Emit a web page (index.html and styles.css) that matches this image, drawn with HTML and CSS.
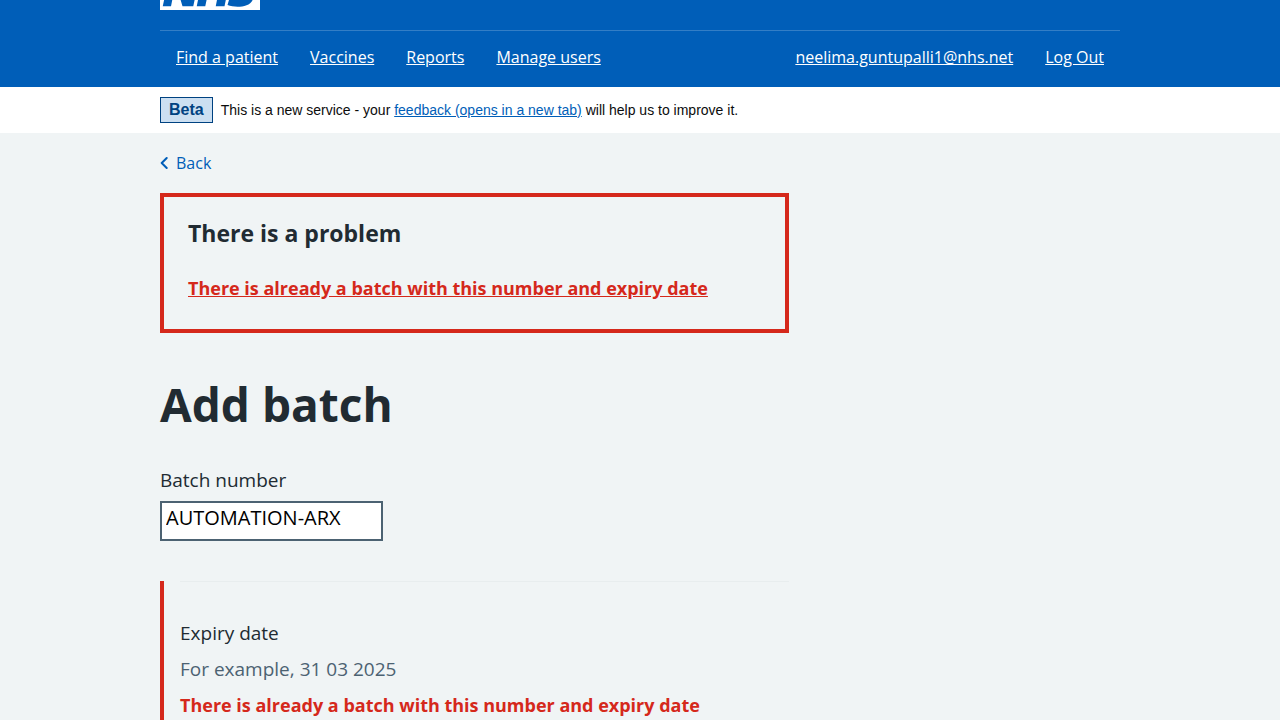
FILE: index.html
```html
<!DOCTYPE html>
<html lang="en">
<head>
<meta charset="utf-8">
<meta name="viewport" content="width=device-width, initial-scale=1">
<title>Add batch</title>
<link rel="stylesheet" href="styles.css">
</head>
<body>
<header class="header">
  <div class="container">
    <a class="logo" href="#" aria-label="NHS">
      <svg class="logo-image" viewBox="0 60 200 20" aria-hidden="true"><path fill="#fff" d="M200 0v80H0V0h200Zm-27.500 5.500c-14.500 0-29 5-29 22 0 10.200 7.700 13.500 14.700 16.300l.7.300c5.400 2 10.100 3.900 10.100 8.400 0 6.500-8.500 7.500-14 7.500s-12.500-1.500-16-3.500L135 70c5.500 2 13.500 3.500 20 3.500 15.500 0 32-4.500 32-22.500 0-19.500-25.500-16.500-25.500-25.500 0-5.500 5.500-6.500 12.500-6.500a35 35 0 0 1 14.500 3l4-13.500c-4.500-2-12-3-20-3Zm-131 2h-22l-14 65H22l9-45h.5l13.500 45h21.500l14-65H64l-9 45h-.5l-13-45Zm63 0h-18l-13 65h17l6-28H117l-5.500 28H129l13.500-65H125L119.500 32h-20l5-24.500Z"/></svg>
    </a>
    <nav class="nav" aria-label="Menu">
      <ul class="nav-list">
        <li><a href="#">Find a patient</a></li>
        <li><a href="#">Vaccines</a></li>
        <li><a href="#">Reports</a></li>
        <li><a href="#">Manage users</a></li>
      </ul>
      <ul class="nav-list">
        <li><a href="#">neelima.guntupalli1@nhs.net</a></li>
        <li><a href="#">Log Out</a></li>
      </ul>
    </nav>
  </div>
</header>
<div class="phase">
  <div class="container phase-content">
    <strong class="tag">Beta</strong>
    <span>This is a new service - your <a href="#">feedback (opens in a new tab)</a> will help us to improve it.</span>
  </div>
</div>
<div class="container">
  <a class="back" href="#">
    <svg class="back-icon" viewBox="0 0 8 14" aria-hidden="true"><path d="M6.700 2 1.700 7l5 5" fill="none" stroke="currentColor" stroke-width="2" stroke-linecap="round" stroke-linejoin="round"/></svg>
    Back
  </a>
  <main class="main">
    <div class="error-summary" role="alert">
      <h2>There is a problem</h2>
      <a href="#expiry">There is already a batch with this number and expiry date</a>
    </div>
    <h1>Add batch</h1>
    <form>
      <label class="label" for="batch">Batch number</label>
      <input class="input" id="batch" type="text" value="AUTOMATION-ARX">
      <div class="error-group" id="expiry" role="group" aria-labelledby="expiry-label">
        <div class="label" id="expiry-label">Expiry date</div>
        <div class="hint">For example, 31 03 2025</div>
        <div class="error-message">There is already a batch with this number and expiry date</div>
      </div>
    </form>
  </main>
</div>
</body>
</html>
```
FILE: styles.css
```css
* {
  box-sizing: border-box;
}

body {
  margin: 0;
  background: #f0f4f5;
  color: #212b32;
  font-family: "Open Sans", "Noto Sans", sans-serif;
  font-size: 19px;
  line-height: 30px;
}

.container {
  max-width: 960px;
  margin: 0 auto;
}

.header {
  background: #005eb8;
  color: #fff;
}

.logo,
.logo-image {
  display: block;
  width: 100px;
}

.logo-image {
  height: 10px;
}

.nav {
  display: flex;
  justify-content: space-between;
  margin-top: 20px;
  padding: 14px 16px 18px;
  border-top: 1px solid rgba(255, 255, 255, 0.2);
  font-size: 16px;
  line-height: 24px;
}

.nav-list {
  display: flex;
  gap: 32px;
  margin: 0;
  padding: 0;
  list-style: none;
}

.nav-list a {
  color: #fff;
}

.phase {
  padding: 10px 0;
  background: #fff;
}

.phase-content {
  display: flex;
  align-items: center;
  gap: 8px;
  color: #0b0c0c;
  font-family: "Liberation Sans", Arial, sans-serif;
  font-size: 14px;
  line-height: 20px;
}

.phase-content a {
  color: #005eb8;
}

.tag {
  padding: 2px 8px;
  border: 1px solid #004281;
  background: #ccdff1;
  color: #004281;
  font-size: 16px;
}

.back {
  display: flex;
  align-items: center;
  gap: 8px;
  width: fit-content;
  margin: 18px 0;
  color: #005eb8;
  font-size: 16px;
  line-height: 24px;
  text-decoration: none;
}

.back-icon {
  width: 8px;
  height: 14px;
}

.main {
  width: 65.5%;
}

.error-summary {
  margin-bottom: 40px;
  padding: 20px 24px 26px;
  border: 4px solid #d5281b;
}

h1,
h2 {
  margin: 0;
  font-weight: 700;
}

h2 {
  margin-bottom: 24px;
  font-size: 23px;
  line-height: 32px;
}

.error-summary a,
.error-message {
  color: #d5281b;
  font-size: 18px;
  font-weight: 700;
}

h1 {
  margin-bottom: 30px;
  font-size: 46px;
  line-height: 62px;
}

.label,
.hint {
  display: block;
  margin-bottom: 6px;
}

.input {
  display: block;
  width: 223px;
  height: 40px;
  padding: 0 4px 8px;
  border: 2px solid #4c6272;
  border-radius: 0;
  background: #fff;
  color: #000;
  font: inherit;
  font-size: 20px;
  line-height: 28px;
}

.error-group {
  margin-top: 40px;
  padding: 0 0 40px 16px;
  border-left: 4px solid #d5281b;
}

.error-group::before {
  content: "";
  display: block;
  height: 1px;
  margin-bottom: 36px;
  background: #e8edee;
}

.hint {
  color: #4c6272;
}
```
